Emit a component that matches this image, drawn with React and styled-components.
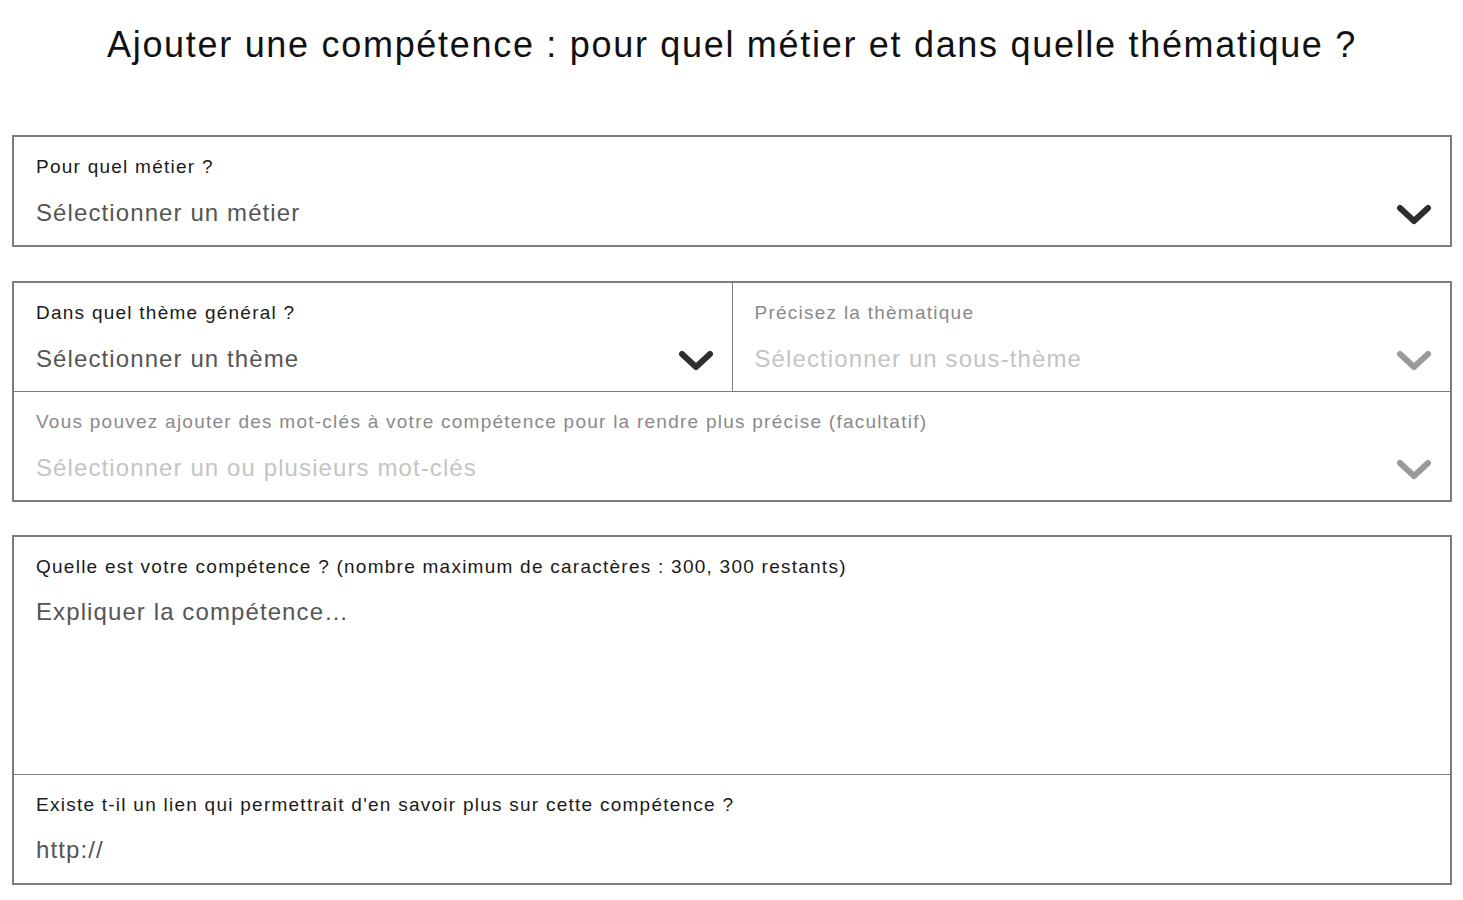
import React from 'react';
import styled, { createGlobalStyle } from 'styled-components';

const GlobalStyle = createGlobalStyle`
  body {
    margin: 0;
    background: #ffffff;
    font-family: "Liberation Sans", Arial, sans-serif;
  }
`;

const Page = styled.div`
  width: 1463px;
  padding: 0 11px 0 12px;
  box-sizing: border-box;
`;

const Title = styled.h1`
  margin: 0;
  height: 135px;
  padding-top: 24px;
  box-sizing: border-box;
  text-align: center;
  font-size: 36px;
  font-weight: normal;
  letter-spacing: 1.7px;
  line-height: 42px;
  color: #111;
`;

const Card = styled.div`
  border: 2px solid #7c7c7c;
  margin-bottom: ${({ gap }) => gap || 0}px;
`;

const Row = styled.div`
  display: flex;
  border-top: ${({ first }) => (first ? 'none' : '1.5px solid #7c7c7c')};
`;

const Field = styled.div`
  flex: 1;
  min-height: ${({ tall }) => (tall ? 237 : 108)}px;
  box-sizing: border-box;
  padding: 19px 18px 0 22px;
  border-left: ${({ split }) => (split ? '1.5px solid #7c7c7c' : 'none')};
`;

const Label = styled.div`
  font-size: 19px;
  line-height: 22px;
  letter-spacing: 1.25px;
  color: ${({ muted }) => (muted ? '#8a8a8a' : '#1a1a1a')};
`;

const Value = styled.div`
  display: flex;
  align-items: center;
  justify-content: space-between;
  margin-top: 20px;
  font-size: 24px;
  line-height: 28px;
  letter-spacing: 1.1px;
  color: ${({ muted }) => (muted ? '#c4c4c4' : '#555555')};
`;

const Arrow = styled.svg`
  flex: none;
  margin-top: 5px;
`;

const Chevron = ({ color }) => (
  <Arrow width="36" height="24" viewBox="0 0 36 24">
    <polyline
      points="4,5 18,18 32,5"
      fill="none"
      stroke={color}
      strokeWidth="6"
      strokeLinecap="round"
      strokeLinejoin="round"
    />
  </Arrow>
);

const Select = ({ label, placeholder, muted, split }) => (
  <Field split={split}>
    <Label muted={muted}>{label}</Label>
    <Value muted={muted}>
      <span>{placeholder}</span>
      <Chevron color={muted ? '#9a9a9a' : '#2e2e2e'} />
    </Value>
  </Field>
);

const App = () => (
  <>
    <GlobalStyle />
    <Page>
      <Title>Ajouter une compétence : pour quel métier et dans quelle thématique ?</Title>

      <Card gap={34}>
        <Row first>
          <Select label="Pour quel métier ?" placeholder="Sélectionner un métier" />
        </Row>
      </Card>

      <Card gap={33}>
        <Row first>
          <Select label="Dans quel thème général ?" placeholder="Sélectionner un thème" />
          <Select split muted label="Précisez la thèmatique" placeholder="Sélectionner un sous-thème" />
        </Row>
        <Row>
          <Select
            muted
            label="Vous pouvez ajouter des mot-clés à votre compétence pour la rendre plus précise (facultatif)"
            placeholder="Sélectionner un ou plusieurs mot-clés"
          />
        </Row>
      </Card>

      <Card>
        <Row first>
          <Field tall>
            <Label>Quelle est votre compétence ? (nombre maximum de caractères : 300, 300 restants)</Label>
            <Value>Expliquer la compétence…</Value>
          </Field>
        </Row>
        <Row>
          <Field>
            <Label>Existe t-il un lien qui permettrait d'en savoir plus sur cette compétence ?</Label>
            <Value>http://</Value>
          </Field>
        </Row>
      </Card>
    </Page>
  </>
);

export default App;
